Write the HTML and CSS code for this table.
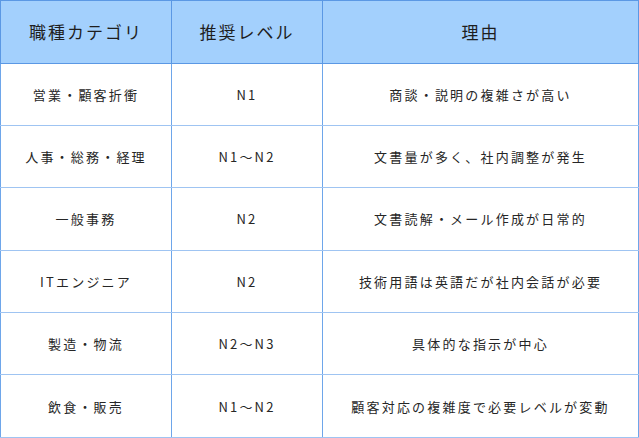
FILE: index.html
```html
<!DOCTYPE html>
<html lang="ja">
<head>
<meta charset="utf-8">
<link rel="stylesheet" href="styles.css">
</head>
<body>
<table class="level-table">
  <colgroup>
    <col class="c1"><col class="c2"><col class="c3">
  </colgroup>
  <thead>
    <tr><th>職種カテゴリ</th><th>推奨レベル</th><th>理由</th></tr>
  </thead>
  <tbody>
    <tr><td>営業・顧客折衝</td><td>N1</td><td>商談・説明の複雑さが高い</td></tr>
    <tr><td>人事・総務・経理</td><td>N1〜N2</td><td>文書量が多く、社内調整が発生</td></tr>
    <tr><td>一般事務</td><td>N2</td><td>文書読解・メール作成が日常的</td></tr>
    <tr><td>ITエンジニア</td><td>N2</td><td>技術用語は英語だが社内会話が必要</td></tr>
    <tr><td>製造・物流</td><td>N2〜N3</td><td>具体的な指示が中心</td></tr>
    <tr><td>飲食・販売</td><td>N1〜N2</td><td>顧客対応の複雑度で必要レベルが変動</td></tr>
  </tbody>
</table>
</body>
</html>
```

FILE: styles.css
```css
html, body {
  margin: 0;
  padding: 0;
  background: #ffffff;
}
body {
  font-family: "Noto Sans CJK JP", "Noto Sans", sans-serif;
  color: #222222;
}
.level-table {
  border-collapse: collapse;
  width: 638px;
  table-layout: fixed;
}
.c1 { width: 171px; }
.c2 { width: 151px; }
.c3 { width: 316px; }
.level-table th,
.level-table td {
  border: 1px solid #6ea6ea;
  text-align: center;
  vertical-align: middle;
  padding: 0;
}
.level-table th {
  background: #a3d0fd;
  height: 61.5px;
  font-size: 17px;
  font-weight: 400;
  letter-spacing: 2px;
  color: #1e1e1e;
  border-color: #5b98e4;
}
.level-table td {
  height: 61.4px;
  font-size: 13px;
  letter-spacing: 2.2px;
  color: #262626;
}
.level-table tbody td {
  border-top-color: #9fc4f2;
  border-bottom-color: #9fc4f2;
}
.level-table tbody tr:first-child td {
  border-top-color: #5b98e4;
}
```
